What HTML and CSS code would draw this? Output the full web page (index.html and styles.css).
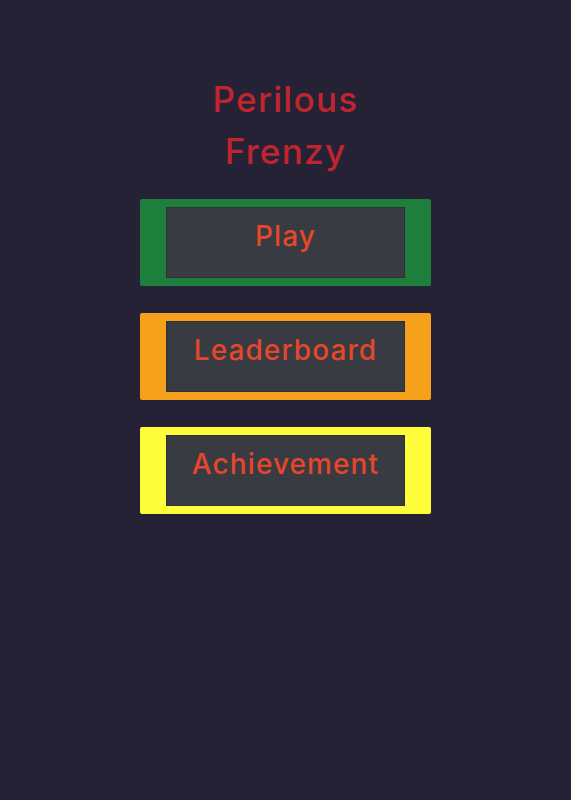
FILE: index.html
```html
<!DOCTYPE html>
<html>
<head>
<meta charset="utf-8">
<link rel="stylesheet" href="styles.css">
</head>
<body>
<main class="menu">
  <h1 class="title">Perilous<br>Frenzy</h1>
  <div class="frame frame-green"><button class="btn">Play</button></div>
  <div class="frame frame-orange"><button class="btn">Leaderboard</button></div>
  <div class="frame frame-yellow"><button class="btn">Achievement</button></div>
</main>
</body>
</html>
```
FILE: styles.css
```css
html, body {
  margin: 0;
  padding: 0;
  background: #252236;
  height: 100%;
}
.menu {
  display: flex;
  flex-direction: column;
  align-items: center;
  padding-top: 73px;
  font-family: "Inter", "Noto Sans", sans-serif;
}
.title {
  margin: 0 0 22px 0;
  font-size: 35px;
  line-height: 52px;
  letter-spacing: 1.3px;
  font-weight: 500;
  color: #c0252e;
  text-align: center;
}
.frame {
  width: 291px;
  height: 87px;
  box-sizing: border-box;
  padding: 8px 26px;
  border-radius: 2px;
}
.frame + .frame {
  margin-top: 27px;
}
.frame-green { background: #1d7f3b; }
.frame-orange { background: #f6a11c; }
.frame-yellow { background: #fefe3b; }
.btn {
  width: 100%;
  height: 100%;
  margin: 0;
  border: 1px solid #2e3036;
  background: #383b41;
  color: #e5462c;
  font-family: "Inter", "Noto Sans", sans-serif;
  font-size: 28px;
  font-weight: 500;
  line-height: 34px;
  letter-spacing: 1.1px;
  padding: 11px 0 0 0;
  text-align: center;
  display: flex;
  justify-content: center;
  align-items: flex-start;
}
```
